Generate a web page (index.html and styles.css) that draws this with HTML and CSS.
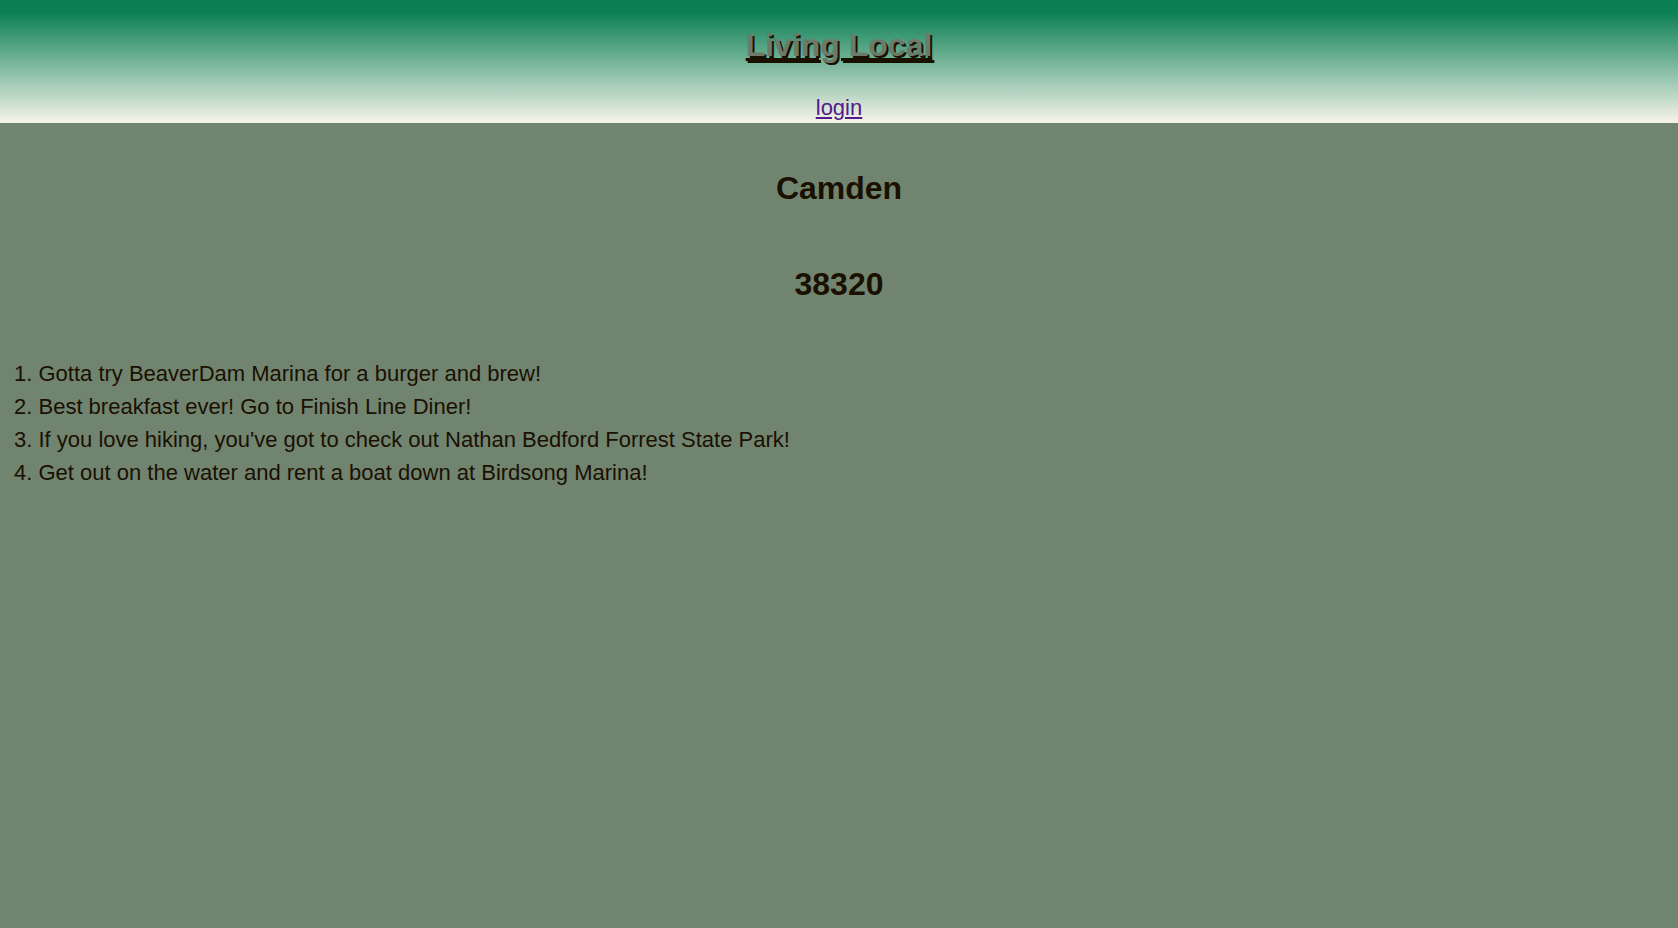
FILE: index.html
```html
<!DOCTYPE html>
<html>
<head>
<meta charset="utf-8">
<title>Living Local</title>
<link rel="stylesheet" href="styles.css">
</head>
<body>
<header class="site-header">
  <h1 class="brand"><a href="#" class="brand-link">Living Local</a></h1>
  <nav class="nav"><a href="#" class="nav-link">login</a></nav>
</header>
<main class="content">
  <h1 class="city">Camden</h1>
  <h1 class="zip">38320</h1>
  <ol class="tips">
    <li>Gotta try BeaverDam Marina for a burger and brew!</li>
    <li>Best breakfast ever! Go to Finish Line Diner!</li>
    <li>If you love hiking, you've got to check out Nathan Bedford Forrest State Park!</li>
    <li>Get out on the water and rent a boat down at Birdsong Marina!</li>
  </ol>
</main>
</body>
</html>
```
FILE: styles.css
```css
html, body {
  margin: 0;
  padding: 0;
}
body {
  background: #718470;
  color: #1a1000;
  font-family: "Liberation Sans", Arial, sans-serif;
  min-height: 928px;
}
.site-header {
  height: 123px;
  background: linear-gradient(to bottom, #0b8055 0%, #0b8055 10%, #f7f4ea 100%);
  text-align: center;
  display: flex;
  flex-direction: column;
  align-items: center;
}
.brand {
  margin: 27px 0 0;
  font-size: 32px;
  line-height: 37px;
  font-weight: bold;
}
.brand-link {
  color: #6c7a6a;
  text-decoration: underline;
  text-decoration-color: #1a1000;
  text-shadow: 2px 2px 0 #1a1000;
}
.nav {
  margin-top: 31px;
  font-size: 22px;
  line-height: 25px;
}
.nav-link {
  color: #551a8b;
}
.content {
  padding: 0 14px;
}
.city, .zip {
  text-align: center;
  font-size: 32px;
  line-height: 37px;
  margin: 0;
}
.city {
  padding-top: 47px;
}
.zip {
  padding-top: 59px;
}
.tips {
  list-style: decimal inside;
  padding: 0;
  margin: 54px 0 0;
  font-size: 22px;
  line-height: 33px;
}
```
